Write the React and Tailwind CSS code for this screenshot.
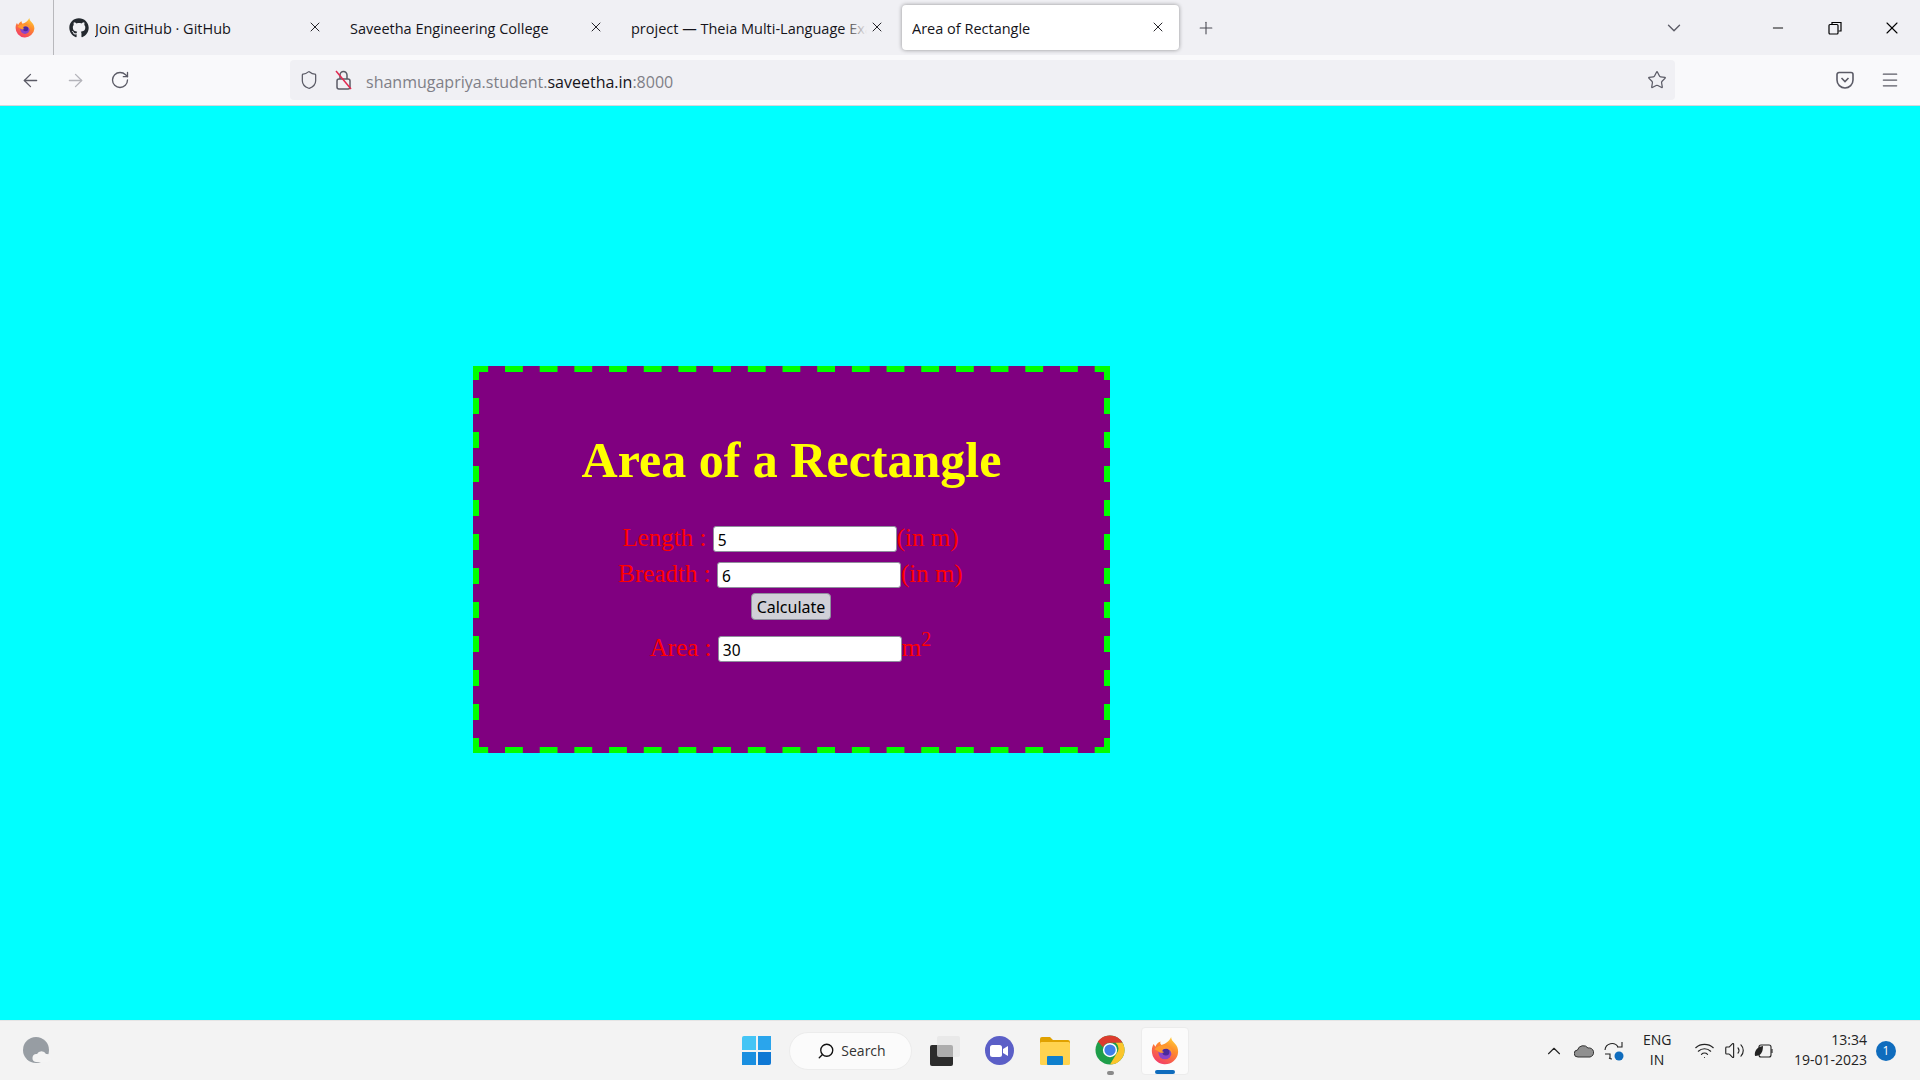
import { FaGithub } from 'react-icons/fa'
import { ArrowLeft, ArrowRight, RotateCw, Shield, Star, Menu, X, Plus, ChevronDown, ChevronUp, Search, Minus, Wifi, Volume2 } from 'lucide-react'

const ui = "font-['Open_Sans',sans-serif]"

function FirefoxLogo({ size = 20 }) {
  return (
    <svg width={size} height={size} viewBox="0 0 32 32">
      <defs>
        <linearGradient id="ffa" x1="0.8" y1="0" x2="0.25" y2="1">
          <stop offset="0" stopColor="#ffd23b" />
          <stop offset="0.4" stopColor="#ff8a2b" />
          <stop offset="1" stopColor="#f2386b" />
        </linearGradient>
      </defs>
      <path d="M23 0c0 3 2 5 4 7 3 3 4 6 4 10a15 15 0 1 1-30-2c0-3 1-5 2-7l2 3c1-3 3-5 6-6-1 2 0 3 1 4 4-1 9-4 11-9z" fill="url(#ffa)" />
      <circle cx="16" cy="18" r="7.5" fill="#8a44c8" />
      <circle cx="17" cy="17" r="4" fill="#4a2a9c" />
      <path d="M4 14c3-4 11-6 16-3 4 2 5 6 4 9-1-5-5-8-10-6-2 2-1 3 1 3-2 2-6 1-7-1-1-1-3-1-4-2z" fill="#ff9a2e" />
    </svg>
  )
}

function ChromeLogo() {
  return (
    <svg width="30" height="30" viewBox="0 0 32 32">
      <circle cx="16" cy="16" r="15.5" fill="#1e9e4a" />
      <path d="M16 .5A15.5 15.5 0 0 1 29.4 8.2H16a8 8 0 0 0-7.4 4.9L3 7A15.5 15.5 0 0 1 16 .5z" fill="#dc3c2e" />
      <path d="M29.4 8.2A15.5 15.5 0 0 1 16 31.5l6.9-11.6A8 8 0 0 0 22 8.2z" fill="#fbc52b" />
      <circle cx="16" cy="16" r="7.6" fill="#fff" />
      <circle cx="16" cy="16" r="6" fill="#3f7fe8" />
    </svg>
  )
}

function WindowsLogo() {
  return (
    <div className="grid grid-cols-2 gap-[2px] w-[29px] h-[29px]">
      <div className="bg-[#45c5f5] rounded-tl-[2px]" />
      <div className="bg-[#2aa5ec]" />
      <div className="bg-[#1a8fe0]" />
      <div className="bg-[#0f78d4] rounded-br-[2px]" />
    </div>
  )
}

function Tab({ icon, title, active, faded, width = 'w-[281px]' }) {
  return (
    <div className={`relative ${width} h-[45px] flex items-center pl-[10px] text-[14.5px] text-[#15141a] rounded-[4px] ${active ? 'bg-white shadow-[0_0_4px_rgba(0,0,0,0.4)]' : ''}`}>
      {icon}
      <span className="max-w-[236px] overflow-hidden whitespace-nowrap relative pt-[2px]">
        {title}
        {faded && <span className="absolute right-0 top-0 bottom-0 w-[24px] bg-gradient-to-r from-transparent to-[#f0f0f4]" />}
      </span>
      <X size={16} strokeWidth={1.4} className="absolute left-[248px] top-[14px]" />
    </div>
  )
}

function Row({ label, value, after, className }) {
  return (
    <div className={`flex justify-center items-center pr-[2px] ${className}`}>
      <span className="pb-[2px]">{label}&nbsp;</span>
      <input
        readOnly
        value={value}
        className="w-[184px] h-[26px] bg-white text-black text-[15.5px] pl-[4px] pt-[2px] border border-[#8f8f9d] rounded-[3px] font-['Noto_Sans',sans-serif]"
      />
      {after}
    </div>
  )
}

function TaskIcon({ className, children }) {
  return <div className={`flex items-center justify-center ${className}`}>{children}</div>
}

export default function App() {
  return (
    <div className={`w-[1920px] h-[1080px] flex flex-col overflow-hidden ${ui}`}>
      {/* Tab strip */}
      <div className="h-[55px] bg-[#f0f0f4] flex items-center relative">
        <div className="w-[54px] h-[55px] border-r border-[#b8b8bc] flex items-center justify-center pr-[4px]">
          <FirefoxLogo />
        </div>
        <div className="w-[5px]" />
        <Tab title="Join GitHub · GitHub" icon={<FaGithub size={20} className="mr-[6px] shrink-0 text-[#24292f]" />} />
        <Tab title="Saveetha Engineering College" />
        <Tab title="project — Theia Multi-Language Exam" faded />
        <Tab title="Area of Rectangle" active width="w-[277px]" />
        <Plus size={20} strokeWidth={1.3} className="ml-[17px] text-[#4a4a52]" />
        <ChevronDown size={22} strokeWidth={1.5} className="ml-[447px] text-[#5b5b66]" />
        <Minus size={16} strokeWidth={1.4} className="ml-[85px] text-black" />
        <svg width="14" height="14" viewBox="0 0 14 14" fill="none" stroke="#000" strokeWidth="1.2" className="ml-[42px]">
          <rect x="1" y="3.5" width="9" height="9.5" rx="1" />
          <path d="M4 3V1.5h9V10h-2.5" />
        </svg>
        <X size={20} strokeWidth={1.3} className="ml-[40px] text-black" />
      </div>

      {/* Toolbar */}
      <div className="h-[50px] bg-[#f9f9fb] flex items-center border-b border-[#d6d6da] box-content">
        <ArrowLeft size={21} strokeWidth={1.5} className="ml-[20px] text-[#5b5b66]" />
        <ArrowRight size={21} strokeWidth={1.5} className="ml-[24px] text-[#b4b4ba]" />
        <RotateCw size={20} strokeWidth={1.6} className="ml-[24px] text-[#5b5b66]" />
        <div className="ml-[160px] w-[1385px] h-[40px] bg-[#f0f0f4] rounded-[4px] flex items-center">
          <Shield size={20} strokeWidth={1.5} className="ml-[9px] text-[#5b5b66]" />
          <div className="relative ml-[16px] w-[18px] h-[20px]">
            <svg width="18" height="20" viewBox="0 0 18 20" fill="none" stroke="#5b5b66" strokeWidth="1.5">
              <rect x="2" y="9" width="13" height="10" rx="2" />
              <path d="M5 9V5a3.5 3.5 0 0 1 7 0v4" />
              <path d="M1 1l15 18" stroke="#e22850" />
            </svg>
          </div>
          <span className="ml-[13px] pt-[3px] text-[16px] text-[#7f7f87]">
            shanmugapriya.student.<span className="text-[#15141a]">saveetha.in</span>:8000
          </span>
          <Star size={20} strokeWidth={1.5} className="ml-auto mr-[8px] text-[#5b5b66]" />
        </div>
        <svg width="20" height="20" viewBox="0 0 20 20" fill="none" stroke="#5b5b66" strokeWidth="1.6" className="ml-[160px]">
          <path d="M2 4.5a2 2 0 0 1 2-2h12a2 2 0 0 1 2 2V10a8 8 0 0 1-16 0z" />
          <path d="M6.5 8l3.5 3.5L13.5 8" />
        </svg>
        <Menu size={20} strokeWidth={1.5} className="ml-[25px] text-[#5b5b66]" />
      </div>

      {/* Page */}
      <div className="flex-1 bg-[#00ffff] font-['Liberation_Serif',serif]">
        <div className="ml-[473px] mt-[260px] w-[637px] h-[387px] p-[6px] text-[#ff0000] text-[25px] text-center [background:linear-gradient(90deg,#0f0_17.7px,transparent_17.7px)_-2.7px_0/34.7px_6px_repeat-x,linear-gradient(90deg,#0f0_17.7px,transparent_17.7px)_-2.7px_100%/34.7px_6px_repeat-x,linear-gradient(#0f0_16px,transparent_16px)_0_-2px/6px_34px_repeat-y,linear-gradient(#0f0_16px,transparent_16px)_100%_-2px/6px_34px_repeat-y,#800080]">
          <h1 className="mt-[61px] text-[50px] leading-[55px] font-bold text-[#ffff00]">Area of a Rectangle</h1>
          <Row className="mt-[33px] h-[36px]" label="Length :" value="5" after={<span className="pb-[2px]">(in m)</span>} />
          <Row className="h-[36px]" label="Breadth :" value="6" after={<span className="pb-[2px]">(in m)</span>} />
          <div className="flex justify-center h-[30px] pr-[1px]">
            <button className="w-[80px] h-[27px] pt-[1px] bg-[#d0d0d7] text-black text-[16px] border border-[#8f8f9d] rounded-[4px] font-['Noto_Sans',sans-serif]">Calculate</button>
          </div>
          <Row
            className="mt-[8px] h-[36px]"
            label="Area :"
            value="30"
            after={<span className="pb-[3px]">m<sup className="text-[20px]">2</sup></span>}
          />
        </div>
      </div>

      {/* Taskbar */}
      <div className="h-[60px] bg-[#f3f3f3] border-t border-[#e5e5e5] flex items-center">
        <svg width="28" height="28" viewBox="0 0 28 28" className="ml-[23px]">
          <circle cx="13" cy="13" r="13" fill="#979da3" />
          <path d="M13 25a4 4 0 0 1 1-8 5 5 0 0 1 9 0 4 4 0 0 1 1 8z" fill="#f4f4f4" />
        </svg>
        <div className="ml-[691px]"><WindowsLogo /></div>
        <div className="ml-[18px] w-[123px] h-[38px] bg-[#fbfbfb] border border-[#ececec] rounded-full flex items-center justify-center gap-[6px] pl-[2px] text-[14px] text-[#333]">
          <Search size={18} strokeWidth={1.8} className="-scale-x-100 text-[#111]" />
          Search
        </div>
        <div className="ml-[18px] relative w-[30px] h-[30px]">
          <div className="absolute left-0 bottom-0 w-[23px] h-[21px] bg-[#2c2c2c] rounded-[2px]" />
          <div className="absolute right-0 top-0 w-[23px] h-[21px] bg-[#e4e4e4]/70 rounded-[2px]" />
        </div>
        <TaskIcon className="ml-[24px] w-[30px] h-[30px]">
          <div className="w-[29px] h-[29px] rounded-full bg-[#5b5fc7] flex items-center justify-center">
            <svg width="18" height="12" viewBox="0 0 18 12" fill="#fff">
              <rect width="12" height="12" rx="2.5" />
              <path d="M13 4l5-3v10l-5-3z" />
            </svg>
          </div>
        </TaskIcon>
        <svg width="30" height="28" viewBox="0 0 30 28" className="ml-[26px]">
          <path d="M0 2a2 2 0 0 1 2-2h8l3 3h15a2 2 0 0 1 2 2v4H0z" fill="#e0a100" />
          <rect y="5" width="30" height="23" rx="1.5" fill="#ffd34f" />
          <rect x="7" y="19" width="16" height="9" rx="1" fill="#0f7fcc" />
        </svg>
        <div className="ml-[25px] w-[30px] h-[46px] flex flex-col items-center pt-[7px] relative">
          <ChromeLogo />
          <div className="absolute bottom-[-1px] w-[7px] h-[4px] rounded-full bg-[#8a8a8a]" />
        </div>
        <div className="ml-[16px] w-[48px] h-[48px] bg-[#fbfbfb] border border-[#ececec] rounded-[4px] flex items-center justify-center relative">
          <FirefoxLogo size={28} />
          <div className="absolute bottom-0 w-[20px] h-[4px] rounded-full bg-[#0f6cbd]" />
        </div>

        <ChevronUp size={22} strokeWidth={1.2} className="ml-[354px] text-[#222]" />
        <svg width="20" height="14" viewBox="0 0 20 14" className="ml-[9px]">
          <path d="M4 13a3.5 3.5 0 0 1-.5-7A6 6 0 0 1 14 4a4.5 4.5 0 0 1 2 9z" fill="#8f8f8f" stroke="#333" strokeWidth="1" />
        </svg>
        <svg width="20" height="20" viewBox="0 0 20 20" fill="none" stroke="#222" strokeWidth="1.1" className="ml-[10px]">
          <path d="M1 9a7 7 0 0 1 13-3M18 1v5h-5" />
          <path d="M1 13h5v5M5 17a6 6 0 0 0 3 1" />
          <circle cx="15" cy="15" r="4.5" fill="#0f6cbd" stroke="none" />
        </svg>
        <div className="ml-[19px] w-[28px] text-[14px] leading-[20px] text-center text-[#222] -mt-[1px]">
          <div>ENG</div>
          <div>IN</div>
        </div>
        <Wifi size={21} strokeWidth={1.3} className="ml-[23px] text-[#222]" />
        <Volume2 size={21} strokeWidth={1.3} className="ml-[9px] text-[#222]" />
        <svg width="20" height="14" viewBox="0 0 20 14" fill="none" stroke="#222" strokeWidth="1.1" className="ml-[9px]">
          <rect x="5" y="1" width="12" height="12" rx="2" />
          <path d="M18 5v4" />
          <path d="M1 12c-1-5 2-9 8-10 0 6-2 10-8 10z" fill="#222" stroke="none" />
        </svg>
        <div className="ml-[16px] w-[77px] text-[14px] leading-[20px] text-right text-[#222] whitespace-nowrap -mt-[1px]">
          <div>13:34</div>
          <div>19-01-2023</div>
        </div>
        <div className="ml-[9px] w-[20px] h-[20px] rounded-full bg-[#0f6cbd] text-white text-[12px] flex items-center justify-center">1</div>
      </div>
    </div>
  )
}
